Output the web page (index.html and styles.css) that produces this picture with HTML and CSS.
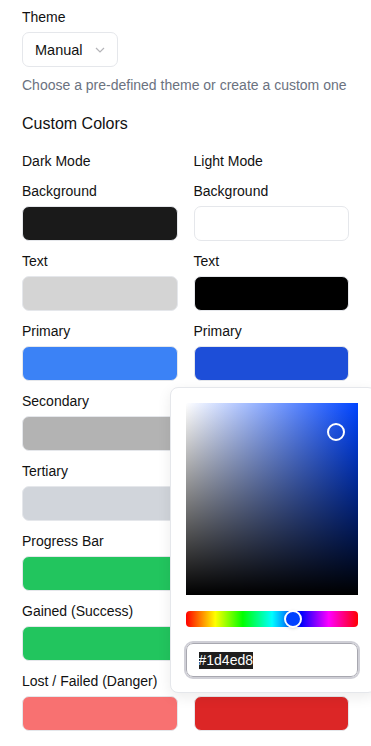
FILE: index.html
```html
<!DOCTYPE html>
<html lang="en">
<head>
  <meta charset="UTF-8">
  <title>Theme Settings</title>
  <link rel="stylesheet" href="styles.css">
</head>
<body>
  <div class="settings">
    <div class="field">
      <label class="label">Theme</label>
      <div class="select">
        <span>Manual</span>
        <svg class="chevron" width="10" height="6" viewBox="0 0 10 6"><path d="M1 1l4 4 4-4" fill="none" stroke="#b4b4b8" stroke-width="1.2"/></svg>
      </div>
      <p class="hint">Choose a pre-defined theme or create a custom one</p>
    </div>

    <h2 class="section-title">Custom Colors</h2>

    <div class="columns">
      <div class="column">
        <div class="label">Dark Mode</div>
        <div class="color-field"><div class="label">Background</div><div class="swatch" style="background:#1a1a1a"></div></div>
        <div class="color-field"><div class="label">Text</div><div class="swatch" style="background:#d4d4d4"></div></div>
        <div class="color-field"><div class="label">Primary</div><div class="swatch" style="background:#3b82f6"></div></div>
        <div class="color-field"><div class="label">Secondary</div><div class="swatch" style="background:#b3b3b3"></div></div>
        <div class="color-field"><div class="label">Tertiary</div><div class="swatch" style="background:#d1d5db"></div></div>
        <div class="color-field"><div class="label">Progress Bar</div><div class="swatch" style="background:#22c55e"></div></div>
        <div class="color-field"><div class="label">Gained (Success)</div><div class="swatch" style="background:#22c55e"></div></div>
        <div class="color-field"><div class="label">Lost / Failed (Danger)</div><div class="swatch" style="background:#f87171"></div></div>
      </div>
      <div class="column">
        <div class="label">Light Mode</div>
        <div class="color-field"><div class="label">Background</div><div class="swatch" style="background:#ffffff"></div></div>
        <div class="color-field"><div class="label">Text</div><div class="swatch" style="background:#000000"></div></div>
        <div class="color-field picker-anchor">
          <div class="label">Primary</div><div class="swatch" style="background:#1d4ed8"></div>
          <div class="picker">
            <div class="saturation">
              <div class="sat-thumb"></div>
            </div>
            <div class="hue">
              <div class="hue-thumb"></div>
            </div>
            <div class="hex-input"><span class="hex-text">#1d4ed8</span></div>
          </div>
        </div>
        <div class="color-field"><div class="label">Secondary</div><div class="swatch" style="background:#6b7280"></div></div>
        <div class="color-field"><div class="label">Tertiary</div><div class="swatch" style="background:#9ca3af"></div></div>
        <div class="color-field"><div class="label">Progress Bar</div><div class="swatch" style="background:#16a34a"></div></div>
        <div class="color-field"><div class="label">Gained (Success)</div><div class="swatch" style="background:#16a34a"></div></div>
        <div class="color-field"><div class="label">Lost / Failed (Danger)</div><div class="swatch" style="background:#dc2626"></div></div>
      </div>
    </div>
  </div>
</body>
</html>
```

FILE: styles.css
```css
html, body {
  overflow: hidden;
}
body {
  font-family: "Liberation Sans", Arial, sans-serif;
  background: #fff;
  color: #111;
  margin: 0;
  padding: 7px 22px 0 22px;
  font-size: 14px;
  line-height: 20px;
}
.field {
  display: flex;
  flex-direction: column;
  align-items: flex-start;
}
.label {
  font-size: 14px;
  line-height: 20px;
  color: #111;
}
.select {
  margin-top: 5px;
  height: 35px;
  box-sizing: border-box;
  width: 96px;
  padding: 0 12px;
  border: 1px solid #e5e7eb;
  border-radius: 7px;
  display: flex;
  align-items: center;
  justify-content: space-between;
  font-size: 14.5px;
}
.chevron {
  margin-top: 1px;
}
.hint {
  margin: 8px 0 0;
  color: #6b7280;
  font-size: 14px;
  line-height: 20px;
}
.section-title {
  margin: 17px 0 15px;
  font-size: 16px;
  line-height: 24px;
  font-weight: normal;
}
.columns {
  display: grid;
  grid-template-columns: 1fr 1fr;
  column-gap: 16px;
  width: 327px;
}
.column {
  display: flex;
  flex-direction: column;
  gap: 10px;
}
.color-field .swatch {
  margin-top: 5px;
}
.swatch {
  height: 35px;
  box-sizing: border-box;
  border: 1px solid #e5e7eb;
  border-radius: 7px;
}
.picker-anchor {
  position: relative;
}
.picker {
  position: absolute;
  top: 66px;
  left: -24px;
  width: 206px;
  box-sizing: border-box;
  padding: 15px;
  background: #fff;
  border: 1px solid #e5e7eb;
  border-radius: 8px;
  box-shadow: 0 4px 14px rgba(0, 0, 0, 0.08);
  z-index: 10;
}
.saturation {
  position: relative;
  height: 192px;
  width: 172px;
  background:
    linear-gradient(to top, #000, rgba(0, 0, 0, 0)),
    linear-gradient(to right, #fff, hsl(224, 100%, 50%));
}
.sat-thumb {
  position: absolute;
  left: 141px;
  top: 20px;
  width: 14px;
  height: 14px;
  border: 2px solid #fff;
  border-radius: 50%;
}
.hue {
  position: relative;
  margin-top: 16px;
  height: 16px;
  width: 172px;
  border-radius: 4px;
  background: linear-gradient(to right, #f00 0%, #ff0 17%, #0f0 33%, #0ff 50%, #00f 67%, #f0f 83%, #f00 100%);
}
.hue-thumb {
  position: absolute;
  left: 98px;
  top: -1px;
  width: 14px;
  height: 14px;
  border: 2px solid #fff;
  border-radius: 50%;
  background: #0040ff;
  box-shadow: 0 1px 3px rgba(0, 0, 0, 0.15);
}
.hex-input {
  margin-top: 16px;
  height: 34px;
  width: 172px;
  box-sizing: border-box;
  border: 1px solid #a8a8b0;
  border-radius: 7px;
  outline: 2px solid #cfcfd6;
  display: flex;
  align-items: center;
  padding-left: 12px;
}
.hex-text {
  background: #1e1e1e;
  color: #fff;
  font-size: 14px;
  line-height: 17px;
}
```
